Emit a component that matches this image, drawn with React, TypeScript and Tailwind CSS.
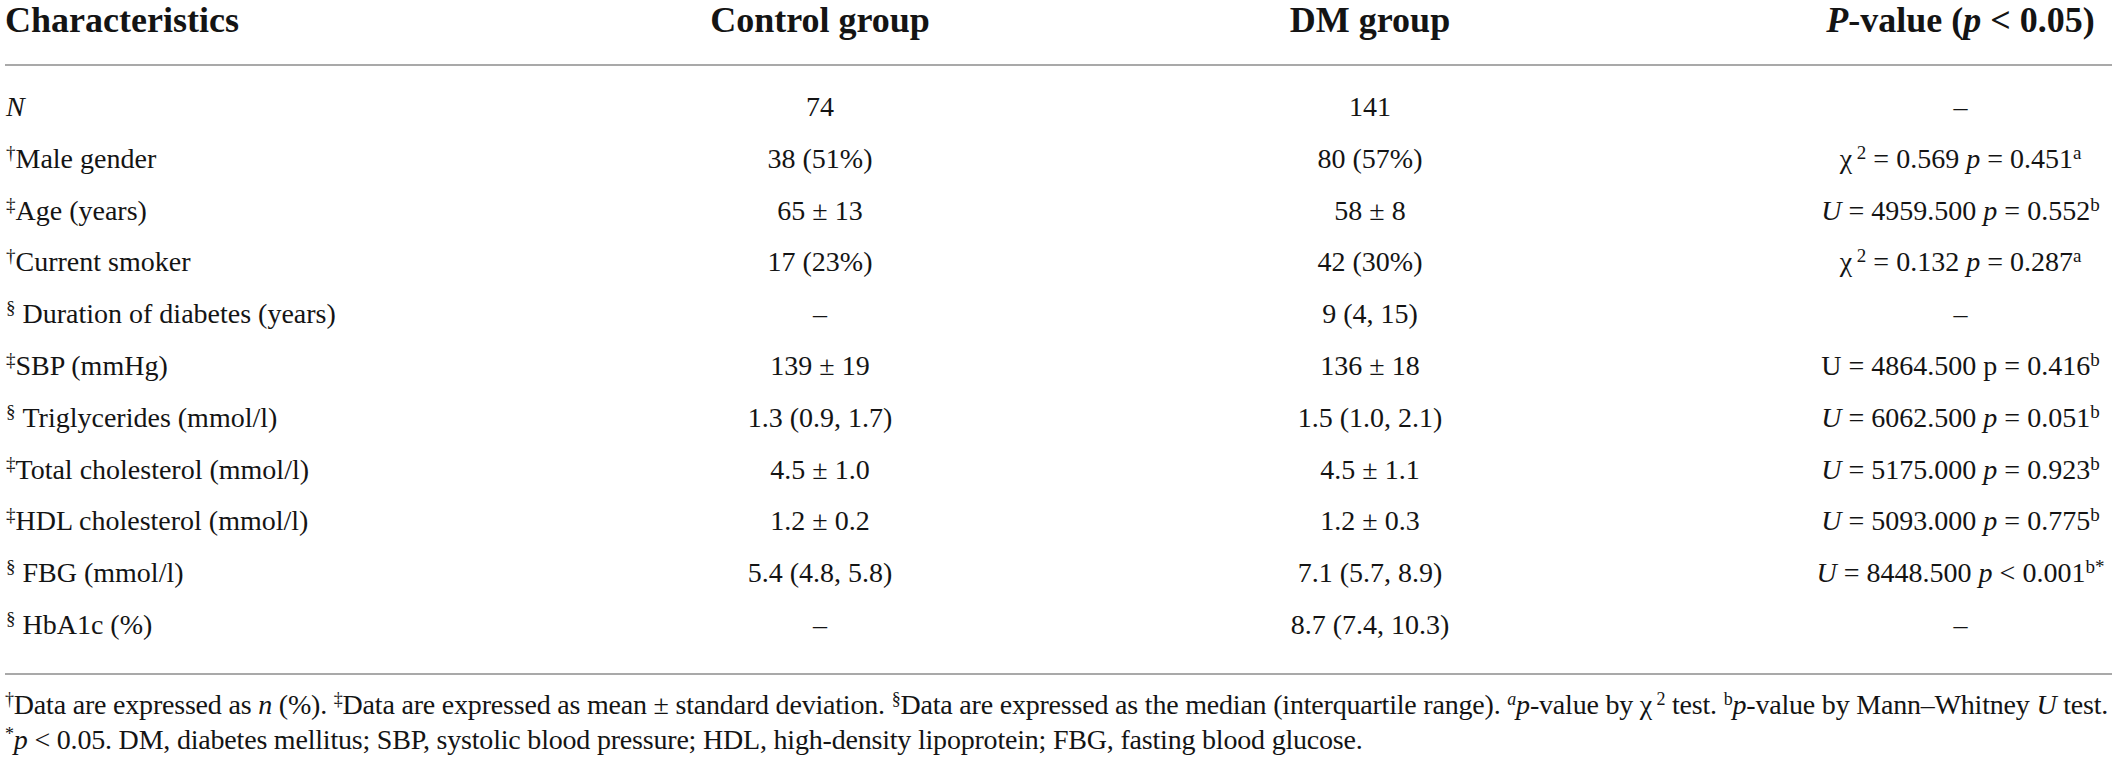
import React from 'react';

type Row = {
  mark?: string;
  label: React.ReactNode;
  control: string;
  dm: string;
  p: React.ReactNode;
};

// raised marker; a span so the preflight sup offset doesn't stack on top
function Sup({ children, italic }: { children: React.ReactNode; italic?: boolean }) {
  return (
    <span className={`text-[19px] leading-none align-[9px] ${italic ? 'italic' : ''}`}>{children}</span>
  );
}

function Note({ children, italic }: { children: React.ReactNode; italic?: boolean }) {
  return (
    <span className={`text-[18px] leading-none align-[9px] ${italic ? 'italic' : ''}`}>{children}</span>
  );
}

const chi = (stat: string, p: string, note: string) => (
  <>
    χ<Sup>&nbsp;2</Sup> = {stat} <i>p</i> = {p}
    <Sup>{note}</Sup>
  </>
);

const mw = (stat: string, rel: string, p: string, note: string) => (
  <>
    <i>U</i> = {stat} <i>p</i> {rel} {p}
    <Sup>{note}</Sup>
  </>
);

const ROWS: Row[] = [
  { label: <i>N</i>, control: '74', dm: '141', p: '–' },
  { mark: '†', label: 'Male gender', control: '38 (51%)', dm: '80 (57%)', p: chi('0.569', '0.451', 'a') },
  { mark: '‡', label: 'Age (years)', control: '65 ± 13', dm: '58 ± 8', p: mw('4959.500', '=', '0.552', 'b') },
  { mark: '†', label: 'Current smoker', control: '17 (23%)', dm: '42 (30%)', p: chi('0.132', '0.287', 'a') },
  { mark: '§', label: '\u00a0Duration of diabetes (years)', control: '–', dm: '9 (4, 15)', p: '–' },
  {
    mark: '‡',
    label: 'SBP (mmHg)',
    control: '139 ± 19',
    dm: '136 ± 18',
    p: (
      <>
        U = 4864.500 p = 0.416<Sup>b</Sup>
      </>
    ),
  },
  { mark: '§', label: '\u00a0Triglycerides (mmol/l)', control: '1.3 (0.9, 1.7)', dm: '1.5 (1.0, 2.1)', p: mw('6062.500', '=', '0.051', 'b') },
  { mark: '‡', label: 'Total cholesterol (mmol/l)', control: '4.5 ± 1.0', dm: '4.5 ± 1.1', p: mw('5175.000', '=', '0.923', 'b') },
  { mark: '‡', label: 'HDL cholesterol (mmol/l)', control: '1.2 ± 0.2', dm: '1.2 ± 0.3', p: mw('5093.000', '=', '0.775', 'b') },
  { mark: '§', label: '\u00a0FBG (mmol/l)', control: '5.4 (4.8, 5.8)', dm: '7.1 (5.7, 8.9)', p: mw('8448.500', '<', '0.001', 'b*') },
  { mark: '§', label: '\u00a0HbA1c (%)', control: '–', dm: '8.7 (7.4, 10.3)', p: '–' },
];

export default function App() {
  return (
    <div className="w-[2117px] h-[770px] bg-white text-[#141414] font-['Liberation_Serif','Times_New_Roman',serif]">
      {/* header */}
      <div className="grid grid-cols-[590px_460px_640px_1fr] h-[64px] text-[36px] leading-[40px] font-bold">
        <div className="pl-[5px]">Characteristics</div>
        <div className="text-center">Control group</div>
        <div className="text-center">DM group</div>
        <div className="pl-[114px] text-center">
          <i>P</i>-value (<i>p</i> &lt; 0.05)
        </div>
      </div>
      <div className="mx-[5px] h-[2px] bg-[#a9a9a9]" />

      {/* body */}
      <div className="pt-[15px] pb-[22px] text-[28px]">
        {ROWS.map((row, i) => (
          <div key={i} className="grid grid-cols-[590px_460px_640px_1fr] h-[51.8px] leading-[51.8px] whitespace-nowrap">
            <div className="pl-[6px]">
              {row.mark && <Sup>{row.mark}</Sup>}
              {row.label}
            </div>
            <div className="text-center">{row.control}</div>
            <div className="text-center">{row.dm}</div>
            <div className="pl-[114px] text-center">{row.p}</div>
          </div>
        ))}
      </div>
      <div className="mx-[5px] h-[2px] bg-[#a9a9a9]" />

      {/* footnotes */}
      <div className="pt-[12px] pl-[5px] text-[28px] leading-[35px] tracking-[-0.2px]">
        <p className="whitespace-nowrap">
          <Note>†</Note>Data are expressed as <i>n</i> (%). <Note>‡</Note>Data are expressed as mean ± standard deviation.{' '}
          <Note>§</Note>Data are expressed as the median (interquartile range). <Note italic>a</Note>
          <i>p</i>-value by χ<Note>&nbsp;2</Note> test. <Note>b</Note>
          <i>p</i>-value by Mann–Whitney <i>U</i> test.
        </p>
        <p className="whitespace-nowrap">
          <Note>*</Note>
          <i>p</i> &lt; 0.05. DM, diabetes mellitus; SBP, systolic blood pressure; HDL, high-density lipoprotein; FBG, fasting blood glucose.
        </p>
      </div>
    </div>
  );
}
